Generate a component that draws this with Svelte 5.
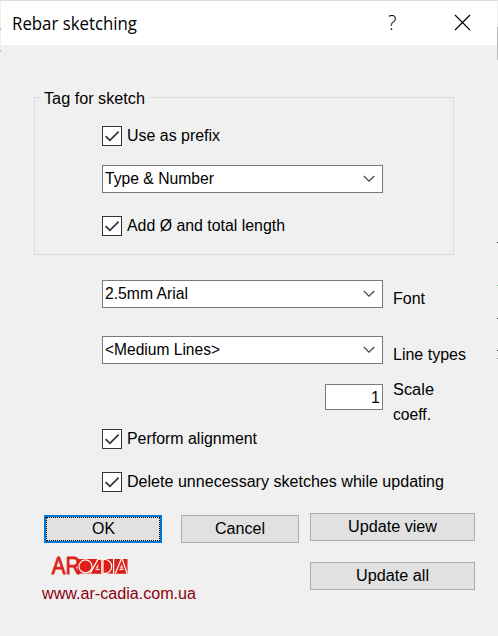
<script>
  let prefix = $state(true);
  let total = $state(true);
  let align = $state(true);
  let clean = $state(true);
</script>

{#snippet check(on, toggle, text, width)}
  <button class="check" role="checkbox" aria-checked={on} onclick={toggle}>
    <span class="box">
      {#if on}
        <svg width="18" height="18" viewBox="0 0 18 18"><path d="M2.6 9.2 L6.9 13.4 L15.6 4.6" fill="none" stroke="#333" stroke-width="1.7" /></svg>
      {/if}
    </span>
    <span class="lbl">{@render fit(text, width)}</span>
  </button>
{/snippet}

{#snippet fit(text, width)}
  <svg class="fit" {width} height="20"><text x="0" y="15" textLength={width} lengthAdjust="spacingAndGlyphs">{text}</text></svg>
{/snippet}

{#snippet combo(text, width)}
  <div class="combo" role="combobox" aria-expanded="false" aria-controls="none" tabindex="0">
    {@render fit(text, width)}
    <svg class="chev" width="12" height="8" viewBox="0 0 12 8"><path d="M0.8 1 L6 6.2 L11.2 1" fill="none" stroke="#444" stroke-width="1.2" /></svg>
  </div>
{/snippet}

<div class="dialog">
  <header>
    <svg class="title" width="126" height="30"><text x="0" y="20" textLength="125" lengthAdjust="spacingAndGlyphs">Rebar sketching</text></svg>
    <span class="help">?</span>
    <svg class="close" width="17" height="17" viewBox="0 0 17 17"><path d="M1 1 L16 16 M16 1 L1 16" stroke="#000" stroke-width="1.15" /></svg>
  </header>

  <section class="group">
    <div class="legend">{@render fit('Tag for sketch', 101)}</div>
    {@render check(prefix, () => (prefix = !prefix), 'Use as prefix', 93)}
    {@render combo('Type & Number', 109)}
    {@render check(total, () => (total = !total), 'Add Ø and total length', 158)}
  </section>

  <div class="row font">
    {@render combo('2.5mm Arial', 83)}
    <span class="side">{@render fit('Font', 32)}</span>
  </div>
  <div class="row lines">
    {@render combo('<Medium Lines>', 115)}
    <span class="side">{@render fit('Line types', 73)}</span>
  </div>
  <div class="row scale">
    <div class="edit">1</div>
    <div class="stack">
      {@render fit('Scale', 41)}
      {@render fit('coeff.', 38)}
    </div>
  </div>
  <div class="checks">
    {@render check(align, () => (align = !align), 'Perform alignment', 130)}
    {@render check(clean, () => (clean = !clean), 'Delete unnecessary sketches while updating', 317)}
  </div>

  <footer>
    <div class="left">
      <div class="pair">
        <button class="btn ok">{@render fit('OK', 23)}</button>
        <button class="btn">{@render fit('Cancel', 50)}</button>
      </div>
      <svg class="logo" width="80" height="22" viewBox="0 0 80 22" role="img" aria-label="ARCADIA">
        <rect x="27.5" y="5" width="50" height="14.6" fill="#dd1f1a" />
        <text x="1.8" y="19.6" class="ar" textLength="28.5" lengthAdjust="spacingAndGlyphs">AR</text>
        <circle cx="35.5" cy="12.4" r="6.5" fill="#dd1f1a" stroke="#fff" stroke-width="1.1" />
        <g fill="#dd1f1a" stroke="#fff" stroke-width="1.2">
          <path d="M40 19.6 L48 5.2 H51.8 V19.6" />
          <path d="M53 5.5 H55.5 A7 7 0 0 1 55.5 19.4 H53 Z" />
          <path d="M63.6 5 V19.6" />
          <path d="M65.3 19.6 L71.3 5 H72.3 L77 19.6" />
        </g>
        <path d="M45.5 15.5 H49.5 M69.5 15.5 H73.5" stroke="#fff" stroke-width="1.2" />
        <path d="M48.3 9.5 V14.5 H45.5 Z M71.6 10 L73.4 14.5 H69.9 Z" fill="#f6c6c4" />
      </svg>
      <div class="link">{@render fit('www.ar-cadia.com.ua', 154)}</div>
    </div>
    <div class="right">
      <button class="btn wide">{@render fit('Update view', 89)}</button>
      <button class="btn wide">{@render fit('Update all', 73)}</button>
    </div>
  </footer>
  <div class="edge"></div>
  <div class="ticks"></div>
  <div class="ticks start"></div>
</div>

<style>
  :global(body) { margin: 0; background: #f0f0f0; }
  .dialog {
    position: relative;
    box-sizing: border-box;
    width: 498px;
    height: 636px;
    overflow: hidden;
    background: #f0f0f0;
    border-top: 1px solid #dcdcdc;
    font: 16px/20px "Liberation Sans", Arial, sans-serif;
    color: #000;
  }
  button { font: inherit; color: inherit; padding: 0; border: 0; background: none; }
  svg { display: block; flex: none; overflow: visible; }
  .fit text { fill: currentColor; }
  header {
    display: flex;
    height: 44px;
    margin: 0 1px;
    padding-left: 11px;
    background: #fff;
  }
  .title { margin-top: 9px; font: 17.8px "Open Sans", "Noto Sans", sans-serif; }
  .help { width: 12px; margin: 10px 0 0 250px; font: 300 20px/24px "Open Sans", sans-serif; }
  .close { margin: 13px 0 0 54px; }
  .group {
    box-sizing: border-box;
    width: 420px;
    height: 158px;
    margin: 52px 0 0 34px;
    border: 1px solid #dcdcdc;
    padding-left: 67px;
  }
  .legend {
    width: 104px;
    height: 20px;
    margin: -9px 0 0 -61px;
    padding-left: 3px;
    background: #f0f0f0;
  }
  .check { display: flex; height: 20px; align-items: flex-start; text-align: left; }
  .box {
    box-sizing: border-box;
    width: 20px;
    height: 20px;
    border: 1px solid #333;
    background: #fff;
  }
  .lbl { margin-left: 5px; }
  .group .check { margin-top: 17px; }
  .group .combo { margin-top: 19px; }
  .group .combo + .check { margin-top: 23px; }
  .combo {
    box-sizing: border-box;
    display: flex;
    justify-content: space-between;
    width: 281px;
    height: 28px;
    padding: 3px 7px 0 2px;
    border: 1px solid #7a7a7a;
    background: #fff;
  }
  .chev { margin-top: 6px; }
  .row { display: flex; padding-left: 102px; }
  .side { margin: 9px 0 0 10px; }
  .font { height: 28px; margin-top: 25px; }
  .lines { height: 28px; margin-top: 28px; }
  .scale { height: 45px; margin-top: 16px; padding-left: 325px; }
  .edit {
    box-sizing: border-box;
    width: 58px;
    height: 26px;
    margin-top: 4px;
    padding: 3px 2px 0 0;
    border: 1px solid #7a7a7a;
    background: #fff;
    text-align: right;
  }
  .stack { display: flex; flex-direction: column; gap: 5px; margin-left: 10px; }
  .checks { display: flex; flex-direction: column; gap: 23px; margin: 4px 0 0 102px; }
  footer { display: flex; margin: 21px 0 0 44px; }
  .left { width: 255px; padding-top: 2px; }
  .pair { display: flex; gap: 19px; }
  .btn {
    box-sizing: border-box;
    display: flex;
    justify-content: center;
    width: 118px;
    height: 28px;
    padding-top: 3px;
    border: 1px solid #adadad;
    background: #e1e1e1;
  }
  .ok { padding-top: 2px; border: 2px solid #0078d7; outline: 1px dotted #000; outline-offset: -3px; }
  .right { display: flex; flex-direction: column; gap: 21px; margin-left: 11px; }
  .wide { width: 165px; }
  .logo { margin: 11px 0 0 6px; }
  .ar { font: 24.5px "Liberation Sans", sans-serif; fill: #dd1f1a; stroke: #dd1f1a; stroke-width: 0.9; }
  .link { margin: 8px 0 0 -2px; color: #8b0010; }
  .edge { position: absolute; right: 0; top: 26px; width: 1px; height: 33px; background: #b8b8b8; }
  .ticks {
    position: absolute;
    right: 0;
    top: 241px;
    width: 1px;
    height: 1px;
    background: #222;
    box-shadow: 0 43px #4cc84c, 0 76px #222, 0 108px #222, 0 116px #999;
  }
  .start { left: 0; right: auto; top: 27px; background: #bbb; box-shadow: 0 1px #bbb, 0 22px #bbb, 0 23px #bbb; }
</style>
